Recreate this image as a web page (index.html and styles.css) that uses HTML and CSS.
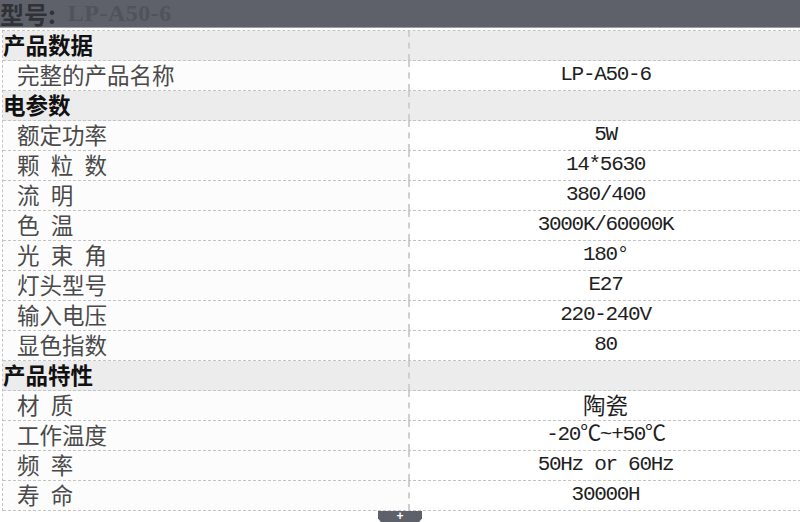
FILE: index.html
```html
<!DOCTYPE html>
<html lang="zh-CN">
<head>
<meta charset="utf-8">
<title>型号 LP-A50-6</title>
<link rel="stylesheet" href="styles.css">
</head>
<body>
<div class="page">
  <div class="bar"><span class="bar-key">型号:</span><span class="bar-val">LP-A50-6</span></div>
  <div class="spec">
    <div class="row group"><div class="cell lab">产品数据</div><div class="cell val"></div></div>
    <div class="row"><div class="cell lab">完整的产品名称</div><div class="cell val">LP-A50-6</div></div>
    <div class="row group"><div class="cell lab">电参数</div><div class="cell val"></div></div>
    <div class="row"><div class="cell lab">额定功率</div><div class="cell val">5W</div></div>
    <div class="row"><div class="cell lab">颗&ensp;粒&ensp;数</div><div class="cell val">14*5630</div></div>
    <div class="row"><div class="cell lab">流&ensp;明</div><div class="cell val">380/400</div></div>
    <div class="row"><div class="cell lab">色&ensp;温</div><div class="cell val">3000K/60000K</div></div>
    <div class="row"><div class="cell lab">光&ensp;束&ensp;角</div><div class="cell val">180°</div></div>
    <div class="row"><div class="cell lab">灯头型号</div><div class="cell val">E27</div></div>
    <div class="row"><div class="cell lab">输入电压</div><div class="cell val">220-240V</div></div>
    <div class="row"><div class="cell lab">显色指数</div><div class="cell val">80</div></div>
    <div class="row group"><div class="cell lab">产品特性</div><div class="cell val"></div></div>
    <div class="row"><div class="cell lab">材&ensp;质</div><div class="cell val cjk">陶瓷</div></div>
    <div class="row"><div class="cell lab">工作温度</div><div class="cell val">-20℃~+50℃</div></div>
    <div class="row"><div class="cell lab">频&ensp;率</div><div class="cell val">50Hz or 60Hz</div></div>
    <div class="row"><div class="cell lab">寿&ensp;命</div><div class="cell val">30000H</div></div>
  </div>
  <div class="tab-wrap"><div class="tab">+</div></div>
</div>
</body>
</html>
```
FILE: styles.css
```css
html, body {
  margin: 0;
  padding: 0;
  background: #ffffff;
}
body {
  width: 800px;
  height: 522px;
  overflow: hidden;
  font-family: "Noto Sans CJK SC", "Liberation Sans", sans-serif;
}
.page {
  display: flex;
  flex-direction: column;
}
.bar {
  height: 27px;
  background: #5e616a;
  border-bottom: 1px solid #9a9ca2;
  display: flex;
  align-items: flex-start;
  line-height: 27px;
  white-space: nowrap;
}
.bar-key {
  font-size: 24px;
  font-weight: 700;
  color: #303238;
}
.bar-val {
  font-family: "Liberation Serif", serif;
  font-weight: 700;
  font-size: 24px;
  color: #50535b;
  margin-left: 12px;
  letter-spacing: 0.5px;
}
.spec {
  margin: 2px 0 0 2px;
  width: 798px;
  border-top: 1px dashed #c4c4c4;
  border-left: 1px dashed #c4c4c4;
}
.row {
  display: grid;
  grid-template-columns: 407px 1fr;
  height: 29px;
  border-bottom: 1px dashed #c4c4c4;
  background: #fcfcfc;
}
.row.group {
  background: #ececec;
}
.cell {
  display: flex;
  align-items: center;
  white-space: nowrap;
  line-height: 22px;
}
.lab {
  padding-left: 14px;
  padding-bottom: 4px;
  font-size: 22.5px;
  color: #4a4a4a;
  border-right: 2px dashed #cfcfcf;
}
.group .lab {
  padding-left: 0;
  font-weight: 700;
  color: #111;
}
.val {
  justify-content: center;
  padding-bottom: 2px;
  font-family: "Liberation Mono", "Noto Sans CJK SC", monospace;
  font-size: 21px;
  letter-spacing: -1.3px;
  color: #1e1e1e;
  background: #ffffff;
}
.group .val {
  background: #ececec;
}
.val.cjk {
  font-family: "Noto Sans CJK SC", sans-serif;
  font-size: 22.5px;
  letter-spacing: 0;
  padding-bottom: 4px;
}
.tab-wrap {
  display: flex;
  justify-content: center;
}
.tab {
  width: 44px;
  height: 12px;
  background: #5e616a;
  clip-path: polygon(0 0, 100% 0, 100% 60%, 92% 100%, 8% 100%, 0 60%);
  color: #ffffff;
  font-family: "Liberation Sans", sans-serif;
  font-weight: 700;
  font-size: 12px;
  line-height: 11px;
  text-align: center;
}
```
